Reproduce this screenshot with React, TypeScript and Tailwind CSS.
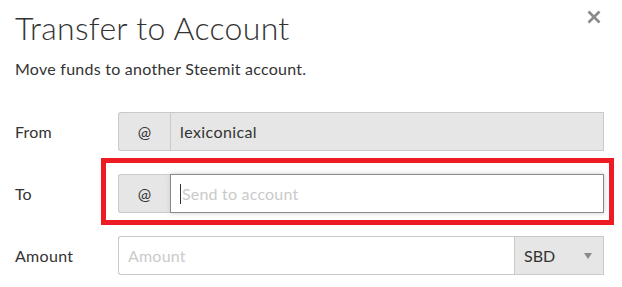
import React from "react";

export default function App() {
  return (
    <div
      className="relative w-[622px] h-[287px] overflow-hidden bg-white text-[#333]"
      style={{ fontFamily: "Lato, 'Open Sans', sans-serif" }}
    >
      <button className="absolute top-[10px] left-[587px] w-[14px] h-[14px] flex items-center justify-center">
        <svg width="14" height="14" viewBox="0 0 14 14">
          <path d="M1.5 1.5 L12.5 12.5 M12.5 1.5 L1.5 12.5" stroke="#8a8a8a" strokeWidth="2.6" strokeLinecap="butt" />
        </svg>
      </button>
      <div className="pl-[15px] pr-[18px] pt-[8px] flex flex-col">
        <h1 className="text-[32px] leading-[40px] font-light tracking-[0.3px]">Transfer to Account</h1>
        <p className="mt-[11px] text-[16px] leading-[20px] tracking-[0.25px]">Move funds to another Steemit account.</p>
        <div className="mt-[33px] flex flex-col gap-[23px]">
          <div className="flex items-center h-[39px]">
            <div className="w-[103px] text-[16px] tracking-[0.2px]">From</div>
            <div className="flex w-[486px] h-[39px]">
              <div className="w-[52px] flex items-center justify-center bg-[#e6e6e6] border border-r-0 border-[#cacaca] rounded-l-[3px] text-[16px]">@</div>
              <div className="flex-1 flex items-center bg-[#e6e6e6] border border-[#cacaca] pl-[9px] text-[16px] tracking-[0.4px]">lexiconical</div>
            </div>
          </div>
          <div className="flex items-center h-[39px]">
            <div className="w-[103px] text-[16px]">To</div>
            <div className="relative flex w-[486px] h-[39px]">
              <div className="absolute left-[-17px] top-[-16px] right-[-10px] bottom-[-12px] border-[5px] border-[#ed1c24]" />
              <div className="w-[52px] flex items-center justify-center bg-[#e6e6e6] border border-r-0 border-[#cacaca] rounded-l-[3px] text-[16px]">@</div>
              <div className="relative flex-1 flex items-center bg-white border border-[#8a8a8a] shadow-[0_0_5px_#cacaca] pl-[9px] text-[16px] text-[#cacaca] tracking-[0.2px]">
                <span className="w-px h-[20px] bg-[#333] mr-[1px]" />
                Send to account
              </div>
            </div>
          </div>
          <div className="flex items-center h-[39px]">
            <div className="w-[103px] text-[16px] tracking-[0.3px]">Amount</div>
            <div className="flex w-[486px] h-[39px]">
              <div className="flex-1 flex items-center bg-white border border-r-0 border-[#cacaca] rounded-l-[3px] pl-[9px] text-[16px] text-[#cacaca] tracking-[0.2px]">Amount</div>
              <div className="w-[90px] flex items-center justify-between bg-[#e6e6e6] border border-[#cacaca] pl-[9px] pr-[11px] text-[16px]">
                <span>SBD</span>
                <svg width="8" height="6" viewBox="0 0 8 6"><path d="M0 0 L8 0 L4 6 Z" fill="#8a8a8a" /></svg>
              </div>
            </div>
          </div>
        </div>
      </div>
    </div>
  );
}
